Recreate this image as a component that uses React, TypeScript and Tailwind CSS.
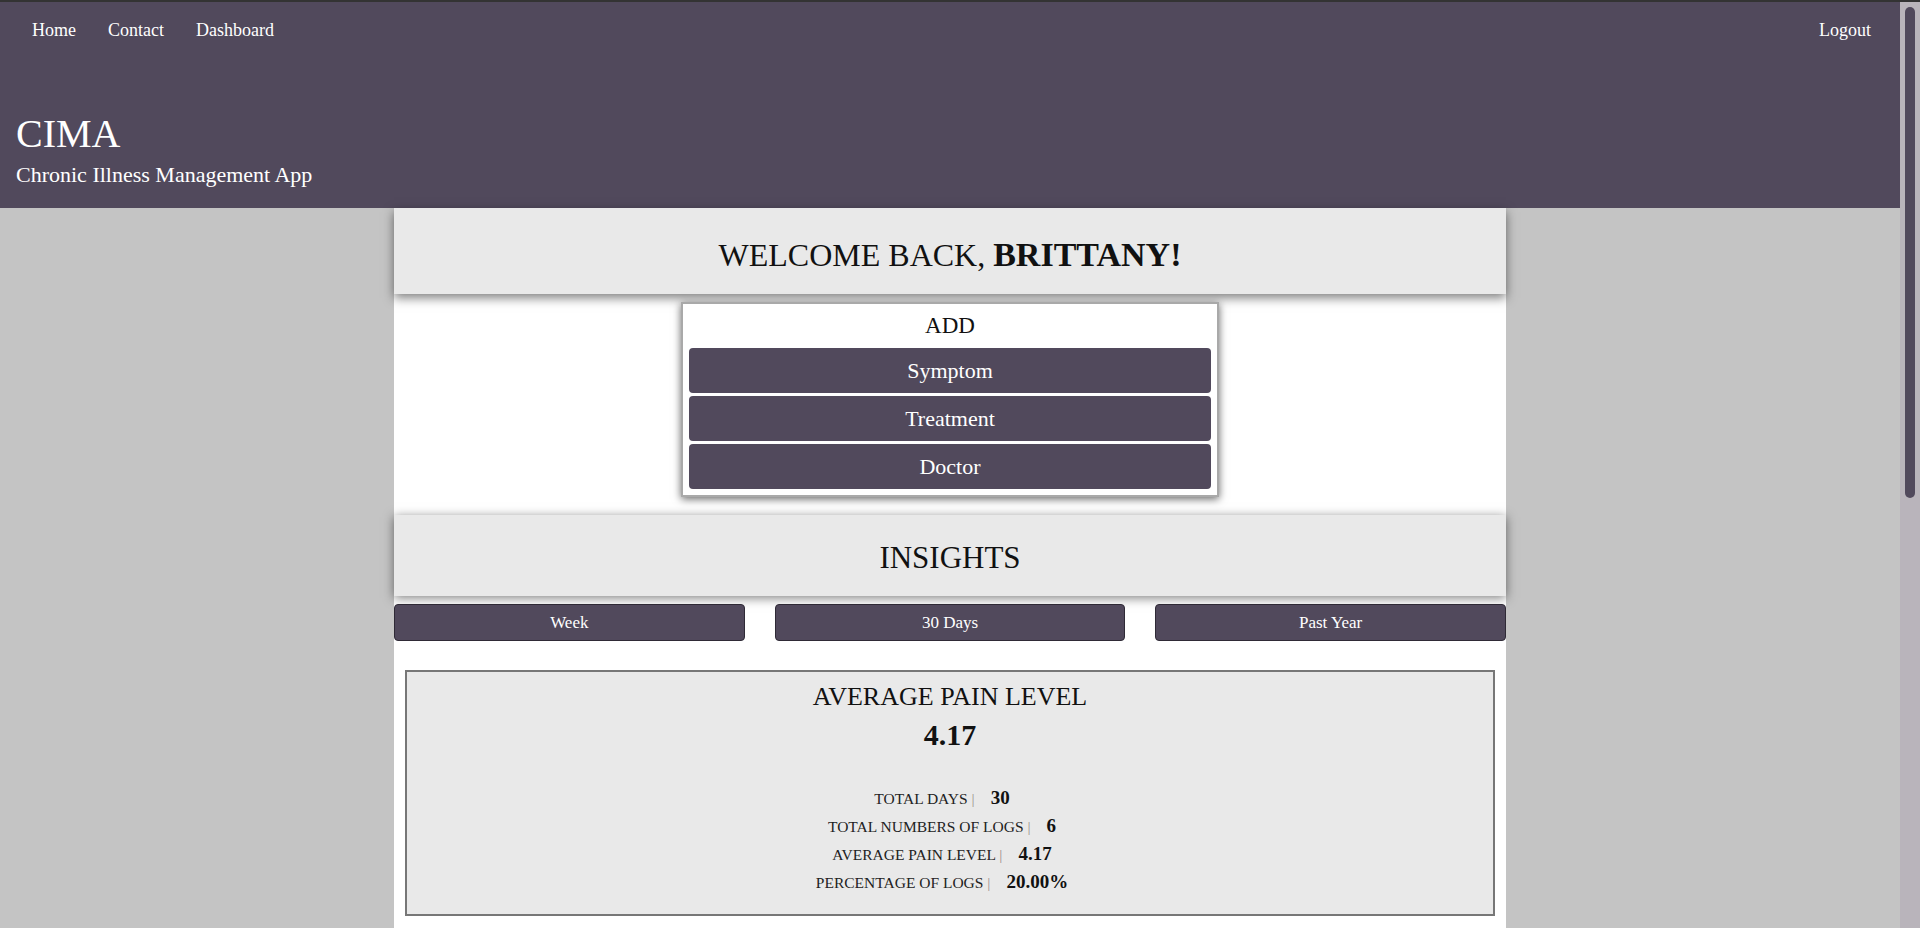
import React from "react";

const stats: { label: string; value: string }[] = [
  { label: "TOTAL DAYS", value: "30" },
  { label: "TOTAL NUMBERS OF LOGS", value: "6" },
  { label: "AVERAGE PAIN LEVEL", value: "4.17" },
  { label: "PERCENTAGE OF LOGS", value: "20.00%" },
];

export default function App() {
  return (
    <div className="flex h-screen flex-col overflow-hidden bg-[#c4c4c4] font-['Liberation_Serif','Times_New_Roman',serif]">
      <div className="h-[2px] shrink-0 bg-[#333333]" />
      <div className="flex min-h-0 flex-1">
        <div className="min-w-0 flex-1 overflow-hidden">
          <header className="bg-[#51495c] text-white">
            <nav className="flex h-[56px] items-center justify-between pl-[16px] pr-[13px] text-[18px]">
              <ul className="flex">
                <li className="px-[16px]">Home</li>
                <li className="px-[16px]">Contact</li>
                <li className="px-[16px]">Dashboard</li>
              </ul>
              <ul className="flex">
                <li className="px-[16px]">Logout</li>
              </ul>
            </nav>
            <div className="px-[16px] pb-[19px] pt-[52px]">
              <h1 className="text-[40px] leading-[48px]">CIMA</h1>
              <p className="mt-[3px] text-[22px] leading-[28px]">Chronic Illness Management App</p>
            </div>
          </header>

          <main className="mx-auto w-[1112px] bg-white pb-[800px] text-[#111]">
            <section className="flex h-[86px] items-center justify-center bg-[#e9e9e9] pt-[8px] shadow-[0_4px_10px_rgba(0,0,0,0.5)]">
              <h2 className="text-[32px] leading-[40px]">
                WELCOME BACK, <span className="text-[34px] font-bold">BRITTANY!</span>
              </h2>
            </section>

            <section className="mx-auto mt-[8px] w-[538px] border-2 border-[#a9a9a9] bg-white px-[6px] pb-[6px] shadow-[0_2px_8px_rgba(0,0,0,0.6)]">
              <h3 className="flex h-[44px] items-center justify-center text-[23px]">ADD</h3>
              <div className="flex flex-col gap-[3px]">
                {["Symptom", "Treatment", "Doctor"].map((t) => (
                  <button
                    key={t}
                    className="flex h-[45px] items-center justify-center rounded-[4px] bg-[#51495c] text-[22px] text-white"
                  >
                    {t}
                  </button>
                ))}
              </div>
            </section>

            <section className="mt-[18px] flex h-[81px] items-center justify-center bg-[#e9e9e9] pt-[6px] shadow-[0_2px_10px_rgba(0,0,0,0.5)]">
              <h2 className="text-[31px]">INSIGHTS</h2>
            </section>

            <div className="mt-[8px] grid grid-cols-3 gap-[30px]">
              {["Week", "30 Days", "Past Year"].map((t) => (
                <button
                  key={t}
                  className="flex h-[37px] items-center justify-center rounded-[4px] border border-[#2f2a36] bg-[#51495c] text-[17px] text-white"
                >
                  {t}
                </button>
              ))}
            </div>

            <section className="mx-[11px] mt-[29px] border-2 border-[#777777] bg-[#e9e9e9] pb-[17.5px] pt-[8.5px] text-center">
              <h3 className="text-[26px] leading-[32px]">AVERAGE PAIN LEVEL</h3>
              <p className="mt-[4px] text-[30px] font-bold leading-[36px]">4.17</p>
              <div className="mt-[32px] flex flex-col">
                {stats.map((s) => (
                  <div key={s.label} className="flex h-[28px] items-center justify-center">
                    <span className="text-[15.5px] text-[#222]">
                      {s.label} <span className="text-[#9b8f8a]">|</span>
                    </span>
                    <span className="ml-[16px] mr-[16px] text-[19px] font-bold text-[#111]">{s.value}</span>
                  </div>
                ))}
              </div>
            </section>
          </main>
        </div>
        <div className="w-[20px] shrink-0 bg-[#b9b4bb]">
          <div className="mx-auto mt-[5px] h-[491px] w-[10px] rounded-full bg-[#51495c]" />
        </div>
      </div>
    </div>
  );
}
